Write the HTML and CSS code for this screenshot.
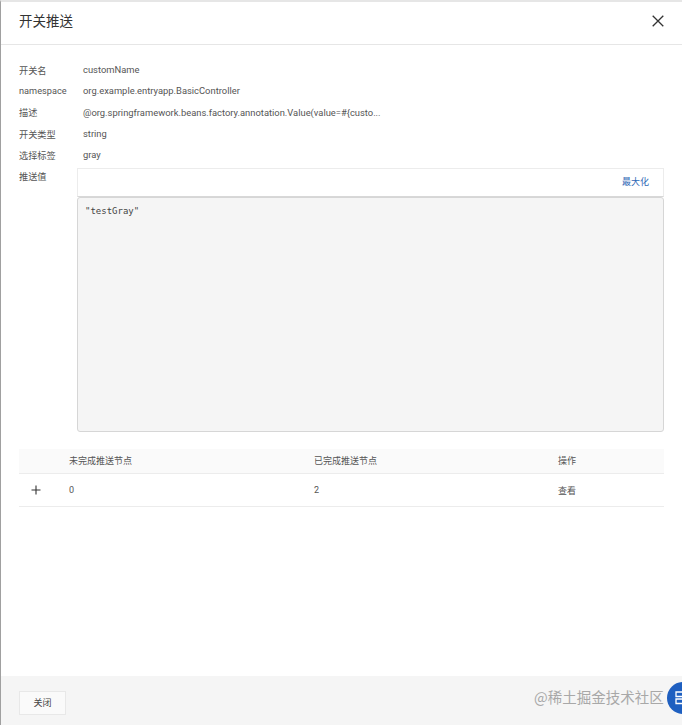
FILE: index.html
```
<!DOCTYPE html>
<html lang="zh">
<head>
<meta charset="utf-8">
<title>开关推送</title>
<link rel="stylesheet" href="styles.css">
</head>
<body>
<div class="drawer">
  <header class="head">
    <h1 class="title">开关推送</h1>
    <svg class="close" width="12" height="12" viewBox="0 0 12 12" aria-label="关闭"><path d="M.7.7l10.6 10.6M11.3.7L.7 11.3" fill="none" stroke="#333" stroke-width="1.3"/></svg>
  </header>
  <main class="body">
    <dl class="info">
      <div class="row"><dt>开关名</dt><dd>customName</dd></div>
      <div class="row"><dt>namespace</dt><dd>org.example.entryapp.BasicController</dd></div>
      <div class="row"><dt>描述</dt><dd>@org.springframework.beans.factory.annotation.Value(value=#{custo...</dd></div>
      <div class="row"><dt>开关类型</dt><dd>string</dd></div>
      <div class="row"><dt>选择标签</dt><dd>gray</dd></div>
      <div class="row row-value">
        <dt>推送值</dt>
        <dd class="value">
          <div class="toolbar"><a class="max">最大化</a></div>
          <pre class="editor">"testGray"</pre>
        </dd>
      </div>
    </dl>
    <div class="table">
      <div class="tr th"><span></span><span>未完成推送节点</span><span>已完成推送节点</span><span>操作</span></div>
      <div class="tr td">
        <svg class="plus" width="10" height="10" viewBox="0 0 10 10"><path d="M5 .5v9M.5 5h9" fill="none" stroke="#333" stroke-width="1.1"/></svg>
        <span>0</span><span>2</span><span>查看</span>
      </div>
    </div>
  </main>
  <footer class="foot"><button class="btn">关闭</button></footer>
</div>
<div class="mark">@稀土掘金技术社区</div>
<div class="fab"><svg width="10" height="14" viewBox="0 0 10 14"><path d="M1 1h8v4.5H1zM1 8h8v4.5H1z" fill="none" stroke="#fff" stroke-width="1.3"/></svg></div>
</body>
</html>
```
FILE: styles.css
```
* { box-sizing: border-box; }
html, body { margin: 0; height: 100%; overflow: hidden; }
body {
  position: relative;
  background: #fff;
  color: #555;
  font-family: Roboto, "Noto Sans CJK SC", sans-serif;
  font-size: 9px;
}
.drawer {
  height: 725px;
  display: flex;
  flex-direction: column;
  border-left: 1px solid #a0a0a0;
  border-top: 2px solid #e6e6e6;
}
.head {
  height: 43px;
  flex: none;
  display: flex;
  align-items: center;
  justify-content: space-between;
  padding: 0 18px 5px 18px;
  border-bottom: 1px solid #e6e6e6;
}
.title { margin: 0 0 1px; font-size: 13.5px; font-weight: 400; color: #333; }
.body { flex: 1; padding: 14px 18px 0 18px; }
.info { margin: 0; display: flex; flex-direction: column; }
.row { display: flex; height: 21.3px; align-items: center; }
.row dt { width: 64px; flex: none; font-size: 9.2px; }
.row dd { margin: 0; font-size: 9.4px; }
.row-value { height: auto; align-items: flex-start; }
.row-value dt { line-height: 21px; margin-right: -6px; padding-top: 1px; }
.row .value { flex: 1; margin-top: 3px; font-size: 9px; }
.toolbar {
  height: 29px;
  display: flex;
  align-items: center;
  justify-content: flex-end;
  padding: 0 14px 2px 0;
  border: 1px solid #ececec;
  border-bottom-color: #d8d8d8;
}
.max { color: #2e67b5; }
.editor {
  margin: 0;
  height: 235px;
  padding: 7px 7px;
  background: #f5f5f5;
  border: 1px solid #d6d6d6;
  border-radius: 3px;
  color: #444;
  font-family: "DejaVu Sans Mono", monospace;
  font-size: 9px;
  line-height: 12px;
}
.table { margin-top: 17px; }
.tr {
  display: grid;
  grid-template-columns: 50px 245px 244px 1fr;
  align-items: center;
  border-bottom: 1px solid #ececec;
}
.th { height: 25px; background: #fafafa; padding-bottom: 2px; }
.td { height: 33px; }
.plus { margin-left: 12px; }
.foot {
  height: 49px;
  flex: none;
  background: #f5f5f5;
  padding: 15px 18px 0;
}
.btn {
  display: block;
  width: 47px;
  height: 24px;
  padding: 0 0 1px;
  background: #fafafa;
  border: 1px solid #e8e8e8;
  color: #444;
  font: inherit;
}
.mark {
  position: absolute;
  left: 534px;
  top: 686px;
  color: #a8a8a8;
  font-family: "Noto Sans CJK SC", sans-serif;
  font-size: 14.5px;
  line-height: 22px;
  white-space: nowrap;
}
.fab {
  position: absolute;
  left: 667px;
  top: 682px;
  width: 32px;
  height: 32px;
  border-radius: 50%;
  background: #1e5fc0;
  padding: 9px 0 0 8px;
}
.fab svg { display: block; }
```
